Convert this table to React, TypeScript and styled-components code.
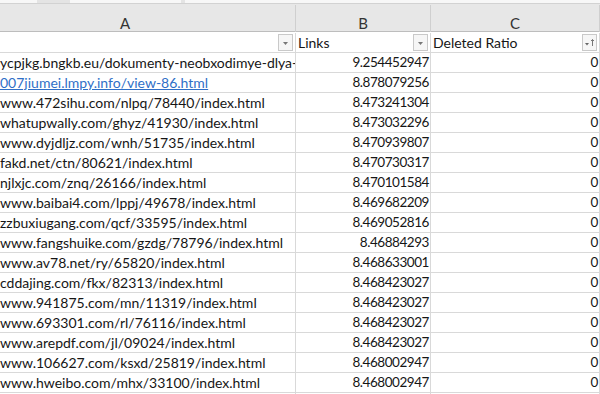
import styled, { createGlobalStyle } from "styled-components";
import { FC } from "react";

interface SheetRow {
  id: number;
  url: string;
  links: string;
  ratio: string;
  isLink?: boolean;
}

const rows: Array<SheetRow> = [
  { id: 1, url: "ycpjkg.bngkb.eu/dokumenty-neobxodimye-dlya-oformleniya", links: "9.254452947", ratio: "0" },
  { id: 2, url: "007jiumei.lmpy.info/view-86.html", links: "8.878079256", ratio: "0", isLink: true },
  { id: 3, url: "www.472sihu.com/nlpq/78440/index.html", links: "8.473241304", ratio: "0" },
  { id: 4, url: "whatupwally.com/ghyz/41930/index.html", links: "8.473032296", ratio: "0" },
  { id: 5, url: "www.dyjdljz.com/wnh/51735/index.html", links: "8.470939807", ratio: "0" },
  { id: 6, url: "fakd.net/ctn/80621/index.html", links: "8.470730317", ratio: "0" },
  { id: 7, url: "njlxjc.com/znq/26166/index.html", links: "8.470101584", ratio: "0" },
  { id: 8, url: "www.baibai4.com/lppj/49678/index.html", links: "8.469682209", ratio: "0" },
  { id: 9, url: "zzbuxiugang.com/qcf/33595/index.html", links: "8.469052816", ratio: "0" },
  { id: 10, url: "www.fangshuike.com/gzdg/78796/index.html", links: "8.46884293", ratio: "0" },
  { id: 11, url: "www.av78.net/ry/65820/index.html", links: "8.468633001", ratio: "0" },
  { id: 12, url: "cddajing.com/fkx/82313/index.html", links: "8.468423027", ratio: "0" },
  { id: 13, url: "www.941875.com/mn/11319/index.html", links: "8.468423027", ratio: "0" },
  { id: 14, url: "www.693301.com/rl/76116/index.html", links: "8.468423027", ratio: "0" },
  { id: 15, url: "www.arepdf.com/jl/09024/index.html", links: "8.468423027", ratio: "0" },
  { id: 16, url: "www.106627.com/ksxd/25819/index.html", links: "8.468002947", ratio: "0" },
  { id: 17, url: "www.hweibo.com/mhx/33100/index.html", links: "8.468002947", ratio: "0" },
  { id: 18, url: "www.lkmhtdfh.com/lldhk/lkhfdlh/index.html", links: "8.467792856", ratio: "0" },
];

const FilterArrow: FC<{ sorted?: boolean }> = ({ sorted }) => (
  <FilterButton>
    <svg width="13" height="15" viewBox="0 0 13 15">
      {sorted ? (
        <>
          <polygon points="2,8 6,8 4,10.5" fill="#666" />
          <path d="M9.5 4.5 V11 M8 6 L9.5 4.5 L11 6" stroke="#777" strokeWidth="1" fill="none" />
        </>
      ) : (
        <polygon points="4,7 9,7 6.5,10" fill="#777" />
      )}
    </svg>
  </FilterButton>
);

const App: FC = () => {
  return (
    <Root>
      <GlobalStyle />
      <TopStrip>
        <StripTab $width={37} />
        <StripTab $width={111} $gap={33} />
        <StripTab $grow $gap={4} />
      </TopStrip>
      <ColumnBar>
        <ColumnLetter $trim={45}>A</ColumnLetter>
        <ColumnLetter>B</ColumnLetter>
        <ColumnLetter>C</ColumnLetter>
      </ColumnBar>
      <Grid>
        <HeadCell>
          <span />
          <FilterArrow />
        </HeadCell>
        <HeadCell>
          <span>Links</span>
          <FilterArrow />
        </HeadCell>
        <HeadCell>
          <span>Deleted Ratio</span>
          <FilterArrow sorted />
        </HeadCell>
        {rows.map((row) => (
          <Row key={row.id}>
            <UrlCell $isLink={row.isLink}>
              <span>{row.url}</span>
            </UrlCell>
            <NumberCell>{row.links}</NumberCell>
            <NumberCell>{row.ratio}</NumberCell>
          </Row>
        ))}
      </Grid>
    </Root>
  );
};

export default App;

const GlobalStyle = createGlobalStyle`
  html, body {
    margin: 0;
    padding: 0;
    background: #fff;
    overflow: hidden;
  }
`;

const Root = styled.div`
  width: 600px;
  height: 394px;
  overflow: hidden;
  font-family: Lato, "Liberation Sans", sans-serif;
  font-size: 14px;
  color: #161616;
`;

const TopStrip = styled.div`
  display: flex;
  height: 3px;
  background: #e4e4e4;
  border-bottom: 1px solid #d2d2d2;
`;

const StripTab = styled.div<{ $width?: number; $gap?: number; $grow?: boolean }>`
  width: ${({ $width }) => ($width ? `${$width}px` : "auto")};
  flex: ${({ $grow }) => ($grow ? 1 : "none")};
  margin-left: ${({ $gap }) => ($gap ? `${$gap}px` : 0)};
  background: #f7f7f7;
`;

const ColumnBar = styled.div`
  display: grid;
  grid-template-columns: 296px 135px 1fr;
  height: 28px;
  background: #e7e7e7;
  border-bottom: 1px solid #bdbdbd;
  box-sizing: border-box;
`;

const ColumnLetter = styled.div<{ $trim?: number }>`
  display: flex;
  align-items: center;
  justify-content: center;
  padding-top: 9px;
  padding-right: ${({ $trim }) => ($trim ? `${$trim}px` : 0)};
  border-right: 1px solid #cfcfcf;
  margin-top: 1px;
  font-size: 15px;
  color: #333;
`;

const Grid = styled.div`
  display: grid;
  grid-template-columns: 296px 135px 1fr;
  grid-auto-rows: 20px;
  margin-top: 1px;
`;

const Row = styled.div`
  display: contents;
`;

const Cell = styled.div`
  box-sizing: border-box;
  border-right: 1px solid #d9d9d9;
  border-bottom: 1px solid #d9d9d9;
  overflow: hidden;
  white-space: nowrap;
  line-height: 19px;
`;

const HeadCell = styled(Cell)`
  display: flex;
  align-items: center;
  justify-content: space-between;
  padding-left: 2px;
  padding-right: 2px;
`;

const FilterButton = styled.div`
  display: flex;
  align-items: center;
  justify-content: center;
  width: 15px;
  height: 17px;
  box-sizing: border-box;
  border: 1px solid #c9c9c9;
  background: #f6f6f6;
`;

const UrlCell = styled(Cell)<{ $isLink?: boolean }>`
  padding-left: 0;
  color: ${({ $isLink }) => ($isLink ? "#2f6fc7" : "#161616")};

  & span {
    text-decoration: ${({ $isLink }) => ($isLink ? "underline" : "none")};
  }
`;

const NumberCell = styled(Cell)`
  text-align: right;
  padding-right: 1px;
  font-size: 13.5px;
  letter-spacing: -0.45px;
`;
